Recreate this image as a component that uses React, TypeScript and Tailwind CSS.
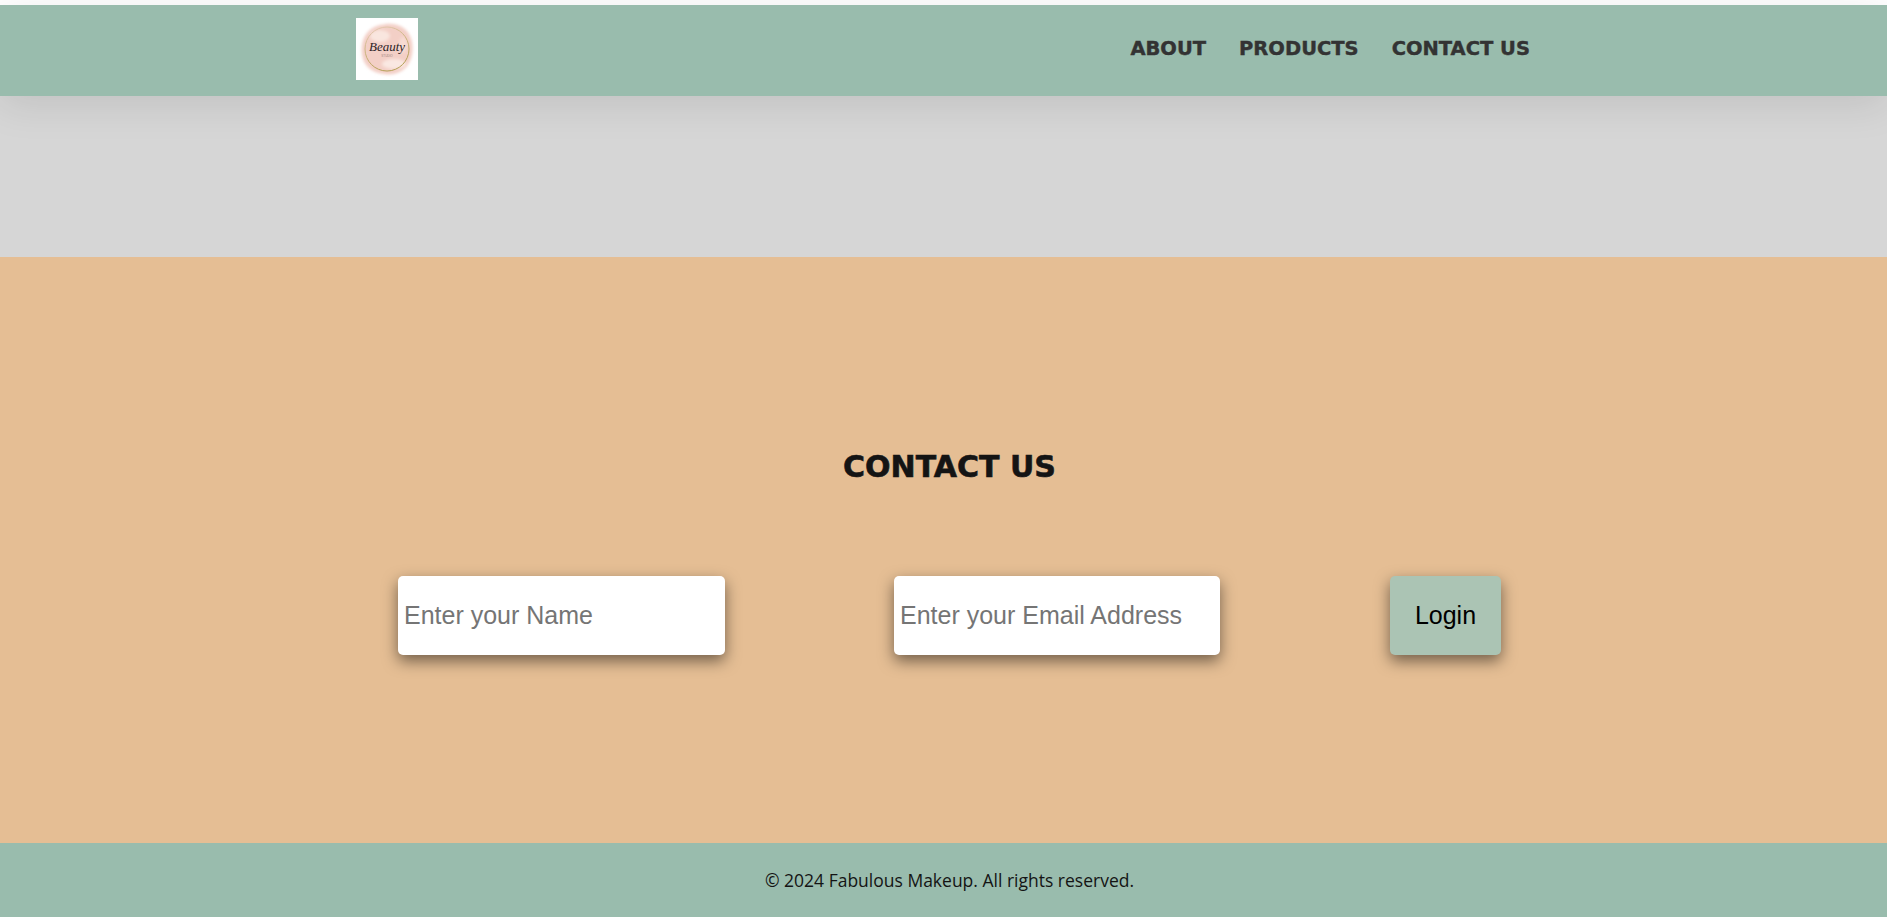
import React from "react";

function Logo() {
  return (
    <svg width="62" height="62" viewBox="0 0 62 62" className="block bg-white">
      <defs>
        <filter id="soft" x="-20%" y="-20%" width="140%" height="140%">
          <feGaussianBlur stdDeviation="1.4" />
        </filter>
        <linearGradient id="ring" x1="0" y1="0" x2="0.4" y2="1">
          <stop offset="0" stopColor="#e9cdbd" />
          <stop offset="0.55" stopColor="#c9b27a" />
          <stop offset="1" stopColor="#b39f55" />
        </linearGradient>
      </defs>
      <path
        d="M30 6 C40 5 50 9 54 18 C58 26 57 38 53 45 C48 54 38 58 28 56 C18 55 10 50 7 41 C4 31 6 19 13 13 C18 8 24 7 30 6 Z"
        fill="#f3cfc6"
        filter="url(#soft)"
      />
      <ellipse cx="24" cy="18" rx="10" ry="6" fill="#f9e6df" filter="url(#soft)" />
      <ellipse cx="38" cy="46" rx="12" ry="5" fill="#fae8e2" filter="url(#soft)" />
      <ellipse cx="47" cy="27" rx="4" ry="8" fill="#f7dcd3" filter="url(#soft)" />
      <circle cx="31" cy="31" r="22" fill="none" stroke="url(#ring)" strokeWidth="1" />
      <text x="31" y="33" textAnchor="middle" fontFamily="'Liberation Serif', serif" fontStyle="italic" fontSize="13" fill="#2b2326">Beauty</text>
      <text x="31" y="39" textAnchor="middle" fontFamily="'Liberation Sans', sans-serif" fontSize="3" fill="#9b8580">STUDIO</text>
    </svg>
  );
}

export default function App() {
  return (
    <div className="min-h-[918px] bg-white pt-[5px] font-['Open_Sans',sans-serif]">
      <header className="relative z-10 flex h-[91px] items-center justify-between bg-[#99bcad] pb-[3px] pl-[356px] pr-[357px] shadow-[0_8px_40px_rgba(0,0,0,0.1)]">
        <Logo />
        <nav className="flex gap-[33px] font-['DejaVu_Sans',sans-serif] text-[19.5px] font-bold text-[#333333] [-webkit-text-stroke:0.4px_#333333]">
          <a>ABOUT</a>
          <a>PRODUCTS</a>
          <a>CONTACT US</a>
        </nav>
      </header>
      <div className="h-[161px] bg-[#d6d6d6]" />
      <main className="h-[586px] bg-[#e5be94] pt-[192px]">
        <h1 className="pl-[12px] text-center font-['DejaVu_Sans',sans-serif] text-[30px] leading-[36px] font-bold text-[#141414] [-webkit-text-stroke:0.6px_#141414]">
          CONTACT US
        </h1>
        <form className="mt-[91px] flex pl-[398px] font-['Liberation_Sans',sans-serif] text-[25px]">
          <input
            placeholder="Enter your Name"
            className="h-[79px] w-[327px] rounded-[5px] bg-white px-[6px] text-[25px] placeholder:text-[#757575] shadow-[0_6px_15px_rgba(0,0,0,0.5)] outline-none"
          />
          <input
            placeholder="Enter your Email Address"
            className="ml-[169px] h-[79px] w-[326px] rounded-[5px] bg-white px-[6px] text-[25px] placeholder:text-[#757575] shadow-[0_6px_15px_rgba(0,0,0,0.5)] outline-none"
          />
          <button
            type="button"
            className="ml-[170px] h-[79px] w-[111px] rounded-[5px] bg-[#abc4b4] text-black shadow-[0_6px_15px_rgba(0,0,0,0.5)]"
          >
            Login
          </button>
        </form>
      </main>
      <footer className="flex h-[74px] items-center justify-center bg-[#99bcad] pl-[12px] text-[17.5px] text-[#141414]">
        © 2024 Fabulous Makeup. All rights reserved.
      </footer>
    </div>
  );
}
